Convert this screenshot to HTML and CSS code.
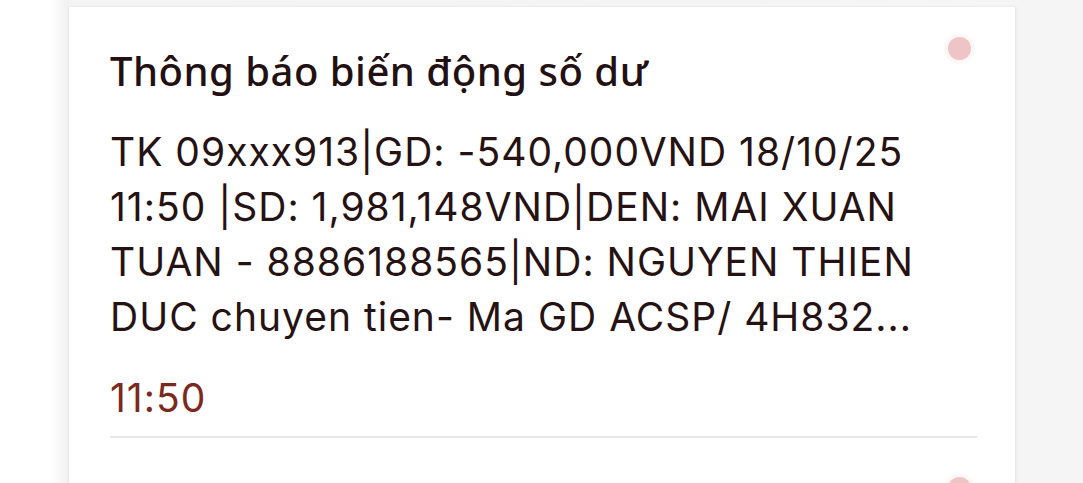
FILE: index.html
```html
<!DOCTYPE html>
<html lang="vi">
<head>
<meta charset="utf-8">
<link rel="stylesheet" href="styles.css">
</head>
<body>
<div class="screen">
  <div class="card">
    <div class="item">
      <span class="dot"></span>
      <div class="item-inner">
        <h2 class="title">Thông báo biến động số dư</h2>
        <p class="message">TK 09xxx913|GD: -540,000VND 18/10/25 11:50 |SD: 1,981,148VND|DEN: MAI XUAN TUAN - 8886188565|ND: NGUYEN THIEN DUC chuyen tien- Ma GD ACSP/ 4H832...</p>
        <div class="time">11:50</div>
      </div>
    </div>
    <div class="item item-next">
      <span class="dot"></span>
    </div>
  </div>
</div>
</body>
</html>
```
FILE: styles.css
```css
html, body {
  margin: 0;
  padding: 0;
  height: 100%;
  overflow: hidden;
}
body {
  background: linear-gradient(90deg, #ffffff 0, #ffffff 52px, #f0f0f0 69px, #f4f4f4 69px, #f5f5f5 100%);
  font-family: Inter, "Noto Sans", sans-serif;
  color: #261213;
}
.screen {
  padding: 7px 0 0 69px;
}
.card {
  width: 946px;
  min-height: 600px;
  background: #ffffff;
  box-shadow: 0 0 2px rgba(0, 0, 0, 0.08), 2px 0 3px rgba(0, 0, 0, 0.04);
}
.item {
  position: relative;
  padding: 39px 38px 0 41px;
}
.item-next {
  height: 60px;
}
.item-inner {
  border-bottom: 2px solid #e9e7e7;
  padding-bottom: 11px;
  margin-bottom: 9px;
}
.dot {
  position: absolute;
  top: 30px;
  right: 44px;
  width: 23px;
  height: 23px;
  border-radius: 50%;
  background: #efc4c7;
  box-shadow: 0 0 0 4px rgba(239, 196, 199, 0.12);
}
.title {
  margin: 0;
  font-family: "Noto Sans", Inter, sans-serif;
  font-weight: 500;
  font-size: 40px;
  line-height: 50px;
  letter-spacing: 0.5px;
  color: #231012;
}
.message {
  margin: 28px 0 0;
  font-size: 39px;
  line-height: 55px;
  letter-spacing: 1px;
  color: #261213;
  padding-right: 20px;
}
.time {
  margin-top: 26px;
  font-size: 39px;
  line-height: 55px;
  letter-spacing: 1px;
  color: #7a2a1e;
}
```
